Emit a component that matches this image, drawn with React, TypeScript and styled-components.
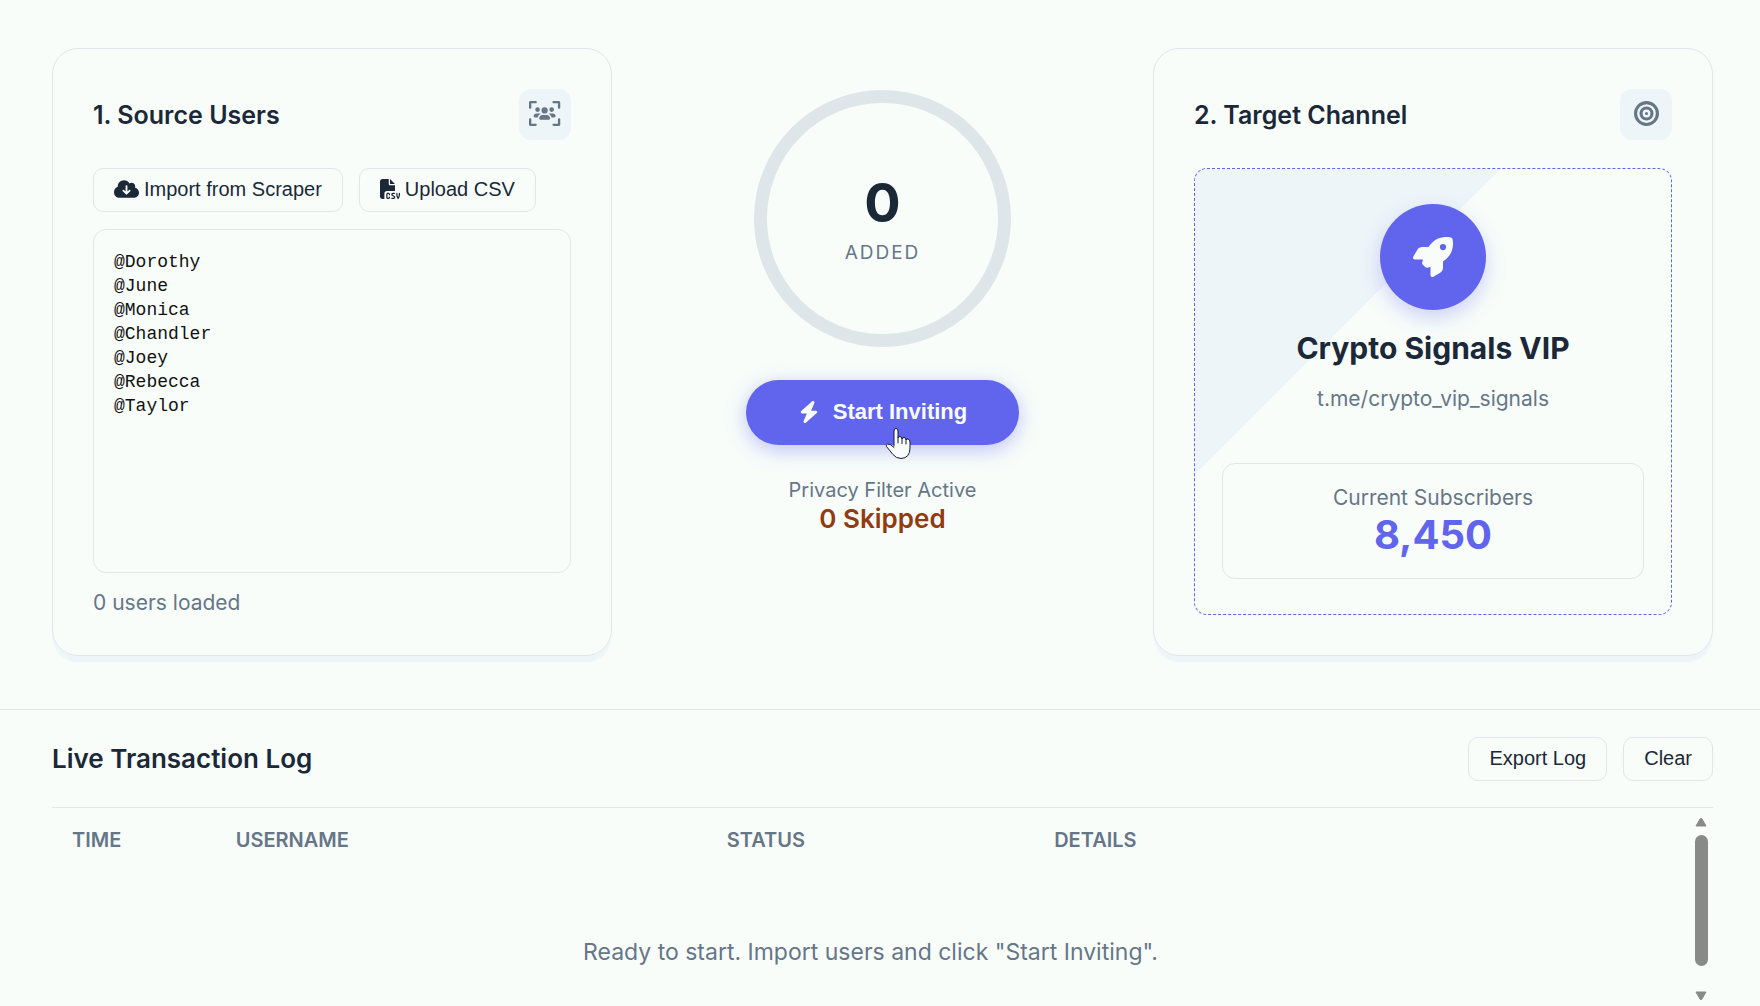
import React, { useState } from "react";
import styled, { createGlobalStyle } from "styled-components";
import {
  FaBolt,
  FaBullseye,
  FaCloudArrowDown,
  FaFileCsv,
  FaRocket,
  FaUsersViewfinder,
} from "react-icons/fa6";

const color = {
  page: "#f8fdfa",
  tint: "#edf5f9",
  line: "#e1e6e9",
  ring: "#dfe6e9",
  ink: "#1b2838",
  muted: "#667687",
  accent: "#6165ee",
  warn: "#923b12",
};

const GlobalStyle = createGlobalStyle`
  *, *::before, *::after { box-sizing: border-box; }
  body {
    margin: 0;
    background: ${color.page};
    color: ${color.ink};
    font-family: Inter, "Liberation Sans", sans-serif;
  }
  h2, h3, p { margin: 0; }
  svg { flex: none; }
  svg[viewBox^="0 0 640"] { width: 1.25em; }
`;

const Page = styled.div`
  display: flex;
  flex-direction: column;
  height: 100vh;
  overflow: hidden;
`;

const Workspace = styled.main`
  display: grid;
  grid-template-columns: minmax(0, 560fr) minmax(0, 541fr) minmax(0, 560fr);
  padding: 48px 47px 53px 52px;
`;

const Card = styled.section`
  display: flex;
  flex-direction: column;
  padding: 40px;
  border: 1px solid ${color.line};
  border-radius: 26px;
  box-shadow: 0 7px 2px -1px ${color.tint};
`;

const CardHeader = styled.header`
  display: flex;
  align-items: center;
  justify-content: space-between;
  margin-bottom: 28px;
`;

const Heading = styled.h2<{ $large?: boolean }>`
  font-size: ${(p) => (p.$large ? 26 : 25)}px;
  line-height: 32px;
  font-weight: 600;
`;

const IconTile = styled.span`
  display: flex;
  align-items: center;
  justify-content: center;
  width: 52px;
  height: 51px;
  padding-bottom: 2px;
  border-radius: 12px;
  background: ${color.tint};
  color: ${color.muted};
  font-size: 25px;
`;

const ButtonRow = styled.div`
  display: flex;
  gap: 16px;
`;

const OutlineButton = styled.button`
  display: flex;
  align-items: center;
  gap: 5px;
  height: 44px;
  padding: 0 20px 2px;
  border: 1px solid ${color.line};
  border-radius: 10px;
  background: transparent;
  color: ${color.ink};
  font: 20px/24px "Liberation Sans", Arial, sans-serif;
  white-space: nowrap;
`;

const UserList = styled.textarea`
  display: block;
  width: 100%;
  height: 344px;
  margin: 17px 0;
  padding: 20px;
  border: 1px solid ${color.line};
  border-radius: 13px;
  outline: none;
  resize: none;
  background: transparent;
  color: #111;
  font: 18px/24px "Liberation Mono", "Courier New", monospace;
`;

const Note = styled.p`
  color: ${color.muted};
  font-size: 21px;
  line-height: 25px;
`;

const Center = styled.section`
  display: flex;
  flex-direction: column;
  align-items: center;
  padding-top: 42px;
`;

const Ring = styled.div`
  display: flex;
  flex-direction: column;
  align-items: center;
  justify-content: center;
  gap: 2px;
  width: 257px;
  height: 257px;
  padding-top: 2px;
  border: 13px solid ${color.ring};
  border-radius: 50%;
`;

const RingValue = styled.strong`
  font-size: 54px;
  line-height: 64px;
  font-weight: 700;
`;

const RingLabel = styled.span`
  color: ${color.muted};
  font-size: 19px;
  line-height: 32px;
  letter-spacing: 2px;
`;

const StartButton = styled.button`
  display: flex;
  align-items: center;
  gap: 13px;
  height: 65px;
  margin: 33px 0 32px;
  padding: 0 52px 2px;
  border: 0;
  border-radius: 33px;
  background: ${color.accent};
  color: ${color.page};
  font: bold 22px/26px "Liberation Sans", Arial, sans-serif;
  box-shadow: 0 5px 20px rgba(97, 101, 238, 0.38);
  position: relative;
  white-space: nowrap;
`;

const Pointer = styled.svg`
  position: absolute;
  left: 139px;
  top: 47px;
  width: 26px;
  height: 33px;
`;

const FilterLabel = styled.p`
  color: ${color.muted};
  font-size: 20px;
  line-height: 26px;
`;

const FilterValue = styled.p`
  color: ${color.warn};
  font-size: 26px;
  line-height: 32px;
  font-weight: 600;
`;

const Channel = styled.div`
  display: flex;
  flex: 1;
  flex-direction: column;
  align-items: center;
  padding: 35px 27px;
  border: 1px dashed ${color.accent};
  border-radius: 13px;
  background: linear-gradient(135deg, ${color.tint} 216px, ${color.page} 216px);
`;

const Avatar = styled.span`
  display: flex;
  align-items: center;
  justify-content: center;
  width: 106px;
  height: 106px;
  margin-bottom: 20px;
  border-radius: 50%;
  background: ${color.accent};
  color: ${color.page};
  font-size: 40px;
  box-shadow: 0 8px 20px rgba(97, 101, 238, 0.28);
`;

const ChannelName = styled.h3`
  font-size: 30px;
  line-height: 36px;
  font-weight: 700;
`;

const ChannelLink = styled.a`
  margin-top: 20px;
  color: ${color.muted};
  font-size: 21px;
  line-height: 26px;
  text-decoration: none;
`;

const Stat = styled.div`
  display: flex;
  flex-direction: column;
  align-items: center;
  align-self: stretch;
  margin-top: auto;
  padding: 21px 20px 19px;
  border: 1px solid ${color.line};
  border-radius: 13px;
  background: ${color.page};
`;

const StatLabel = styled.span`
  color: ${color.muted};
  font-size: 21px;
  line-height: 26px;
`;

const StatValue = styled.strong`
  color: ${color.accent};
  font-size: 40px;
  line-height: 48px;
  font-weight: 700;
`;

const Log = styled.section`
  display: flex;
  flex: 1;
  flex-direction: column;
  min-height: 0;
  padding: 0 47px 0 52px;
  border-top: 1px solid ${color.line};
`;

const LogHeader = styled.header`
  display: flex;
  align-items: center;
  justify-content: space-between;
  padding: 27px 0 26px;
  border-bottom: 1px solid ${color.line};
`;

const LogBody = styled.div`
  display: flex;
  flex: 1;
  min-height: 0;
`;

const Viewport = styled.div`
  flex: 1;
  overflow: hidden;
`;

const Table = styled.table`
  width: 100%;
  table-layout: fixed;
  border-collapse: collapse;
  color: ${color.muted};
`;

const ColumnHead = styled.th<{ $share: number }>`
  width: ${(p) => p.$share}%;
  padding: 20px;
  font-size: 20px;
  line-height: 24px;
  font-weight: 600;
  text-align: left;
`;

const EmptyCell = styled.td`
  padding: 64px 20px 0;
  font-size: 23px;
  line-height: 32px;
  text-align: center;
`;

const Scrollbar = styled.div`
  display: flex;
  flex-direction: column;
  align-items: center;
  width: 24px;
  padding: 8px 0 4px;
`;

const ScrollButton = styled.button`
  display: flex;
  align-items: center;
  justify-content: center;
  width: 13px;
  height: 12px;
  padding: 0;
  border: 0;
  background: transparent;
`;

const ScrollTrack = styled.div`
  flex: 1;
  padding: 7px 0 24px;
`;

const ScrollThumb = styled.div`
  width: 13px;
  height: 100%;
  border-radius: 7px;
  background: #888a88;
`;

const columns = [
  { name: "TIME", share: 10 },
  { name: "USERNAME", share: 30 },
  { name: "STATUS", share: 20 },
  { name: "DETAILS", share: 40 },
];

const initialUsers = [
  "@Dorothy",
  "@June",
  "@Monica",
  "@Chandler",
  "@Joey",
  "@Rebecca",
  "@Taylor",
].join("\n");

function Arrow({ down = false }: { down?: boolean }) {
  return (
    <svg width="12" height="10" viewBox="0 0 12 10" aria-hidden="true">
      <path
        d={down ? "M1 1H11L7 8Q6 9.500 5 8Z" : "M1 9H11L7 2Q6 .5 5 2Z"}
        fill="#888a88"
        stroke="#888a88"
        strokeLinejoin="round"
      />
    </svg>
  );
}

export default function App() {
  const [users, setUsers] = useState(initialUsers);
  return (
    <Page>
      <GlobalStyle />
      <Workspace>
        <Card>
          <CardHeader>
            <Heading>1. Source Users</Heading>
            <IconTile>
              <FaUsersViewfinder />
            </IconTile>
          </CardHeader>
          <ButtonRow>
            <OutlineButton type="button">
              <FaCloudArrowDown />
              Import from Scraper
            </OutlineButton>
            <OutlineButton type="button">
              <FaFileCsv />
              Upload CSV
            </OutlineButton>
          </ButtonRow>
          <UserList
            aria-label="Source users"
            spellCheck={false}
            value={users}
            onChange={(e) => setUsers(e.target.value)}
          />
          <Note>0 users loaded</Note>
        </Card>

        <Center>
          <Ring>
            <RingValue>0</RingValue>
            <RingLabel>ADDED</RingLabel>
          </Ring>
          <StartButton type="button">
            <FaBolt />
            Start Inviting
            <Pointer viewBox="0 0 26 33" aria-hidden="true">
              <path
                d="M9 19V4Q9 1.500 11 1.500T13 4V11Q13 9.500 15 9.500T17 12Q17 10.500 19 10.500T21 13Q21 11.500 23 12T25 15V21Q25 31 16 31.500Q11 31.500 7.500 27L1.500 19.500Q.5 17.500 2.500 17Q5 16.500 9 20.500M13 11V16M17 12V16.500M21 13V17"
                fill={color.page}
                stroke="#161a35"
                strokeLinecap="round"
                strokeLinejoin="round"
              />
            </Pointer>
          </StartButton>
          <FilterLabel>Privacy Filter Active</FilterLabel>
          <FilterValue>0 Skipped</FilterValue>
        </Center>

        <Card>
          <CardHeader>
            <Heading>2. Target Channel</Heading>
            <IconTile>
              <FaBullseye />
            </IconTile>
          </CardHeader>
          <Channel>
            <Avatar>
              <FaRocket />
            </Avatar>
            <ChannelName>Crypto Signals VIP</ChannelName>
            <ChannelLink href="#channel">t.me/crypto_vip_signals</ChannelLink>
            <Stat>
              <StatLabel>Current Subscribers</StatLabel>
              <StatValue>8,450</StatValue>
            </Stat>
          </Channel>
        </Card>
      </Workspace>

      <Log>
        <LogHeader>
          <Heading $large>Live Transaction Log</Heading>
          <ButtonRow>
            <OutlineButton type="button">Export Log</OutlineButton>
            <OutlineButton type="button">Clear</OutlineButton>
          </ButtonRow>
        </LogHeader>
        <LogBody>
          <Viewport>
            <Table>
              <thead>
                <tr>
                  {columns.map((c) => (
                    <ColumnHead key={c.name} scope="col" $share={c.share}>
                      {c.name}
                    </ColumnHead>
                  ))}
                </tr>
              </thead>
              <tbody>
                <tr>
                  <EmptyCell colSpan={4}>
                    Ready to start. Import users and click "Start Inviting".
                  </EmptyCell>
                </tr>
              </tbody>
            </Table>
          </Viewport>
          <Scrollbar>
            <ScrollButton type="button" aria-label="Scroll up">
              <Arrow />
            </ScrollButton>
            <ScrollTrack>
              <ScrollThumb />
            </ScrollTrack>
            <ScrollButton type="button" aria-label="Scroll down">
              <Arrow down />
            </ScrollButton>
          </Scrollbar>
        </LogBody>
      </Log>
    </Page>
  );
}
